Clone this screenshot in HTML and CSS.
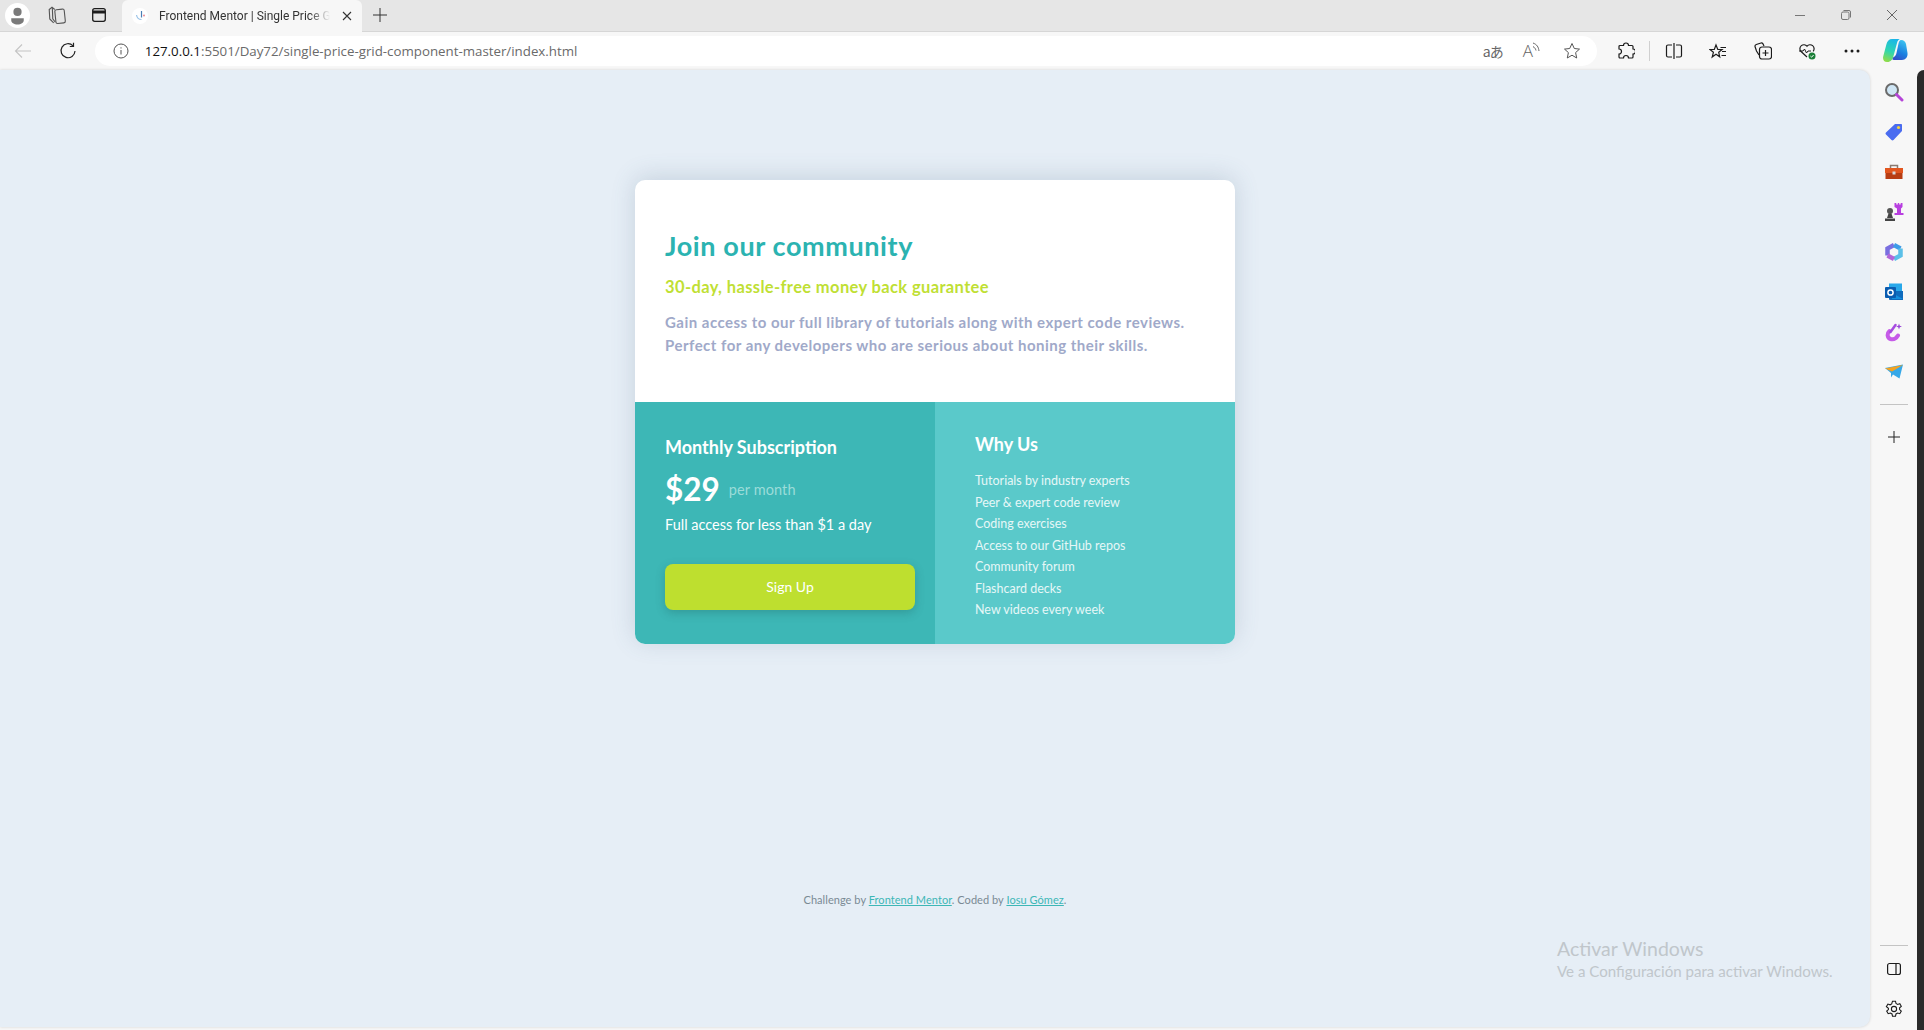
FILE: index.html

```html
<!DOCTYPE html>
<html lang="es">
<head>
  <meta charset="UTF-8" />
  <title>Frontend Mentor | Single Price Grid Component</title>
  <link rel="stylesheet" href="styles.css">
</head>
<body>
  <div class="tabstrip">
    <div class="profile">
      <svg width="25" height="25" viewBox="0 0 28 28"><circle cx="14" cy="14" r="14" fill="#fff"/><circle cx="14" cy="10" r="4.600" fill="#7a7a7a"/><path d="M7 17h14v2.500c0 2.500-3 4.500-7 4.500s-7-2-7-4.500z" fill="#7a7a7a"/></svg>
    </div>
    <div class="strip-btn">
      <svg width="20" height="20" viewBox="0 0 18 18" fill="none" stroke="#555" stroke-width="1"><rect x="7.500" y="4" width="8.500" height="12.500" rx="1.500" transform="rotate(-6 11 10)"/><path d="M7 4 4.500 2 2 4l.5 8.500L6 16"/><path d="M4.800 2.500l.4 10 2.300 3"/></svg>
    </div>
    <div class="strip-btn">
      <svg width="16" height="16" viewBox="0 0 16 16" fill="none" stroke="#1c1c1c" stroke-width="1.300"><rect x="1.700" y="1.700" width="12.600" height="12.600" rx="2"/><path d="M1.700 5h12.600" stroke-width="3"/></svg>
    </div>
    <div class="tab">
      <svg class="favicon" width="16" height="16" viewBox="0 0 16 16"><circle cx="8" cy="8" r="8" fill="#fff"/><path d="M9.500 3v6.500" stroke="#4a7fb5" stroke-width="1.200" fill="none"/><path d="M4.500 7c.5 3 2.500 4.500 5 4.500" stroke="#9ac3e8" stroke-width="1.200" fill="none"/><circle cx="12" cy="7.500" r=".9" fill="#e8808a"/></svg>
      <span class="tab-title">Frontend Mentor | Single Price Grid Component</span>
      <svg class="tab-close" width="10" height="10" viewBox="0 0 10 10" stroke="#333" stroke-width="1.100"><path d="M1 1l8 8M9 1l-8 8"/></svg>
    </div>
    <div class="new-tab">
      <svg width="16" height="16" viewBox="0 0 16 16" stroke="#333" stroke-width="1"><path d="M8 1v14M1 8h14"/></svg>
    </div>
    <div class="win-controls">
      <div class="win-btn"><svg width="12" height="12" viewBox="0 0 12 12" stroke="#777"><path d="M1 6.500h10"/></svg></div>
      <div class="win-btn"><svg width="12" height="12" viewBox="0 0 12 12" fill="none" stroke="#777"><rect x="1.500" y="3" width="7.500" height="7.500" rx="1.500"/><path d="M3.500 1.500h5.500a1.500 1.500 0 0 1 1.500 1.500v5.500"/></svg></div>
      <div class="win-btn"><svg width="12" height="12" viewBox="0 0 12 12" stroke="#666"><path d="M1 1l10 10M11 1L1 11"/></svg></div>
    </div>
  </div>

  <div class="toolbar">
    <div class="tool-btn">
      <svg width="18" height="18" viewBox="0 0 18 18" fill="none" stroke="#c4c4c4" stroke-width="1.100"><path d="M17 9H1.500M8 2.500 1.500 9 8 15.500"/></svg>
    </div>
    <div class="tool-btn">
      <svg width="18" height="18" viewBox="0 0 18 18" fill="none" stroke="#222" stroke-width="1.200"><path d="M14 3.800A7 7 0 1 0 16 9"/><path d="M14.500 .8v3.700h-3.700"/></svg>
    </div>
    <div class="address">
      <svg class="info" width="16" height="16" viewBox="0 0 16 16" fill="none" stroke="#555" stroke-width="1"><circle cx="8" cy="8" r="7"/><path d="M8 7v4.500M8 4.300v1.200"/></svg>
      <span class="url"><span class="host">127.0.0.1</span>:5501/Day72/single-price-grid-component-master/index.html</span>
      <div class="addr-icons">
        <span class="translate">aあ</span>
        <span class="read-aloud">A<svg width="7" height="14" viewBox="0 0 7 14" fill="none" stroke="#666"><path d="M0 1c4 1.500 5.500 4 6 8M0 4.500c1.500 1 2.500 2 3 4"/></svg></span>
        <svg width="18" height="18" viewBox="0 0 18 18" fill="none" stroke="#555" stroke-width="1"><path d="M9 1.500l2.300 5 5.200.6-3.900 3.500 1.100 5.400L9 13.200 4.300 16l1.100-5.400L1.500 7.100l5.200-.6z"/></svg>
      </div>
    </div>
    <div class="tool-btn first">
      <svg width="18" height="18" viewBox="0 0 18 18" fill="none" stroke="#1c1c1c" stroke-width="1.200"><path d="M6.500 3.500a2.500 2.500 0 0 1 5 0H15a1 1 0 0 1 1 1V7a2.500 2.500 0 0 1 0 5v3a1 1 0 0 1-1 1h-3.500a2.500 2.500 0 0 0-5 0H3a1 1 0 0 1-1-1v-3a2.500 2.500 0 0 0 0-5V4.500a1 1 0 0 1 1-1z"/></svg>
    </div>
    <div class="tool-sep"></div>
    <div class="tool-btn">
      <svg width="18" height="18" viewBox="0 0 18 18" fill="none" stroke="#1c1c1c" stroke-width="1.200"><path d="M7 3H3a1.500 1.500 0 0 0-1.500 1.500v9A1.500 1.500 0 0 0 3 15h4M11 3h4a1.500 1.500 0 0 1 1.500 1.500v9A1.500 1.500 0 0 1 15 15h-4M9 1v16"/></svg>
    </div>
    <div class="tool-btn">
      <svg width="18" height="18" viewBox="0 0 18 18" fill="none" stroke="#1c1c1c" stroke-width="1.200"><path d="M7 1.500 8.800 6H13L9.700 8.700l1 4.600L7 10.800l-3.800 2.700 1.200-4.700L1 6h4.300zM11.500 4H17M13 8h4M12.500 12H17" transform="translate(0 1.500)"/></svg>
    </div>
    <div class="tool-btn">
      <svg width="18" height="18" viewBox="0 0 18 18" fill="none" stroke="#1c1c1c" stroke-width="1.200"><path d="M5 13 2.500 9 1 4.500C.8 3.500 1.500 2.800 2.300 2.500L7 1c.8-.2 1.500.2 2 .9L10 4"/><rect x="5.500" y="5" width="12" height="12" rx="2.500"/><path d="M11.500 8v6M8.500 11h6"/></svg>
    </div>
    <div class="tool-btn">
      <svg width="18" height="18" viewBox="0 0 18 18" fill="none"><path d="M9 15 2.800 9.300A4 4 0 0 1 9 4.200a4 4 0 0 1 6.200 5.100" stroke="#1c1c1c" stroke-width="1.200"/><path d="M1 9h4l1.500-2 2 4 1.500-2h3" stroke="#1c1c1c" stroke-width="1"/><circle cx="14" cy="14" r="3.500" fill="#1a7f37"/><path d="M12.400 14l1.200 1.200 2-2.200" stroke="#fff"/></svg>
    </div>
    <div class="tool-btn">
      <svg width="16" height="4" viewBox="0 0 16 4" fill="#1c1c1c"><circle cx="2" cy="2" r="1.500"/><circle cx="8" cy="2" r="1.500"/><circle cx="14" cy="2" r="1.500"/></svg>
    </div>
    <div class="tool-btn">
      <svg width="25" height="23" viewBox="0 0 25 23"><defs><linearGradient id="cpa" x1="0.600" y1="0" x2="0.300" y2="1"><stop offset="0" stop-color="#1bb6e8"/><stop offset=".55" stop-color="#2fd6b0"/><stop offset="1" stop-color="#8fdc4a"/></linearGradient><linearGradient id="cpb" x1="0.700" y1="0" x2="0.300" y2="1"><stop offset="0" stop-color="#3cc4f0"/><stop offset=".6" stop-color="#1b7fe0"/><stop offset="1" stop-color="#3550c8"/></linearGradient></defs><path d="M18 1c3 0 4.500 2 5 4l1.500 9c.5 4-2 7-5.500 7h-8c-2 0-2-1.500-1-2.500 2-1 3-2.500 3.500-4.500l2-9.500C16 2.500 16.800 1 18 1z" fill="url(#cpb)"/><path d="M9 0h8c-1.500.5-2.500 2-3 4L10.500 17c-.7 3.500-3 6-6 6H4c-3 0-4.500-2.500-3.800-5.500L3.500 5C4.300 2 6 0 9 0z" fill="url(#cpa)"/></svg>
    </div>
  </div>

  <div class="window-body">
    <main class="page">
      <div class="card">
        <section class="intro">
          <h1>Join our community</h1>
          <h2>30-day, hassle-free money back guarantee</h2>
          <p>Gain access to our full library of tutorials along with expert code reviews.<br>Perfect for any developers who are serious about honing their skills.</p>
        </section>
        <div class="bottom">
          <section class="subscription">
            <h3>Monthly Subscription</h3>
            <div class="price"><strong>$29</strong><span>per month</span></div>
            <p>Full access for less than $1 a day</p>
            <button class="signup">Sign Up</button>
          </section>
          <section class="why">
            <h3>Why Us</h3>
            <ul>
              <li>Tutorials by industry experts</li>
              <li>Peer &amp; expert code review</li>
              <li>Coding exercises</li>
              <li>Access to our GitHub repos</li>
              <li>Community forum</li>
              <li>Flashcard decks</li>
              <li>New videos every week</li>
            </ul>
          </section>
        </div>
      </div>
      <footer class="attribution">Challenge by <a href="#">Frontend Mentor</a>. Coded by <a href="#">Iosu Gómez</a>.</footer>
      <div class="activate">
        <div class="activate-title">Activar Windows</div>
        <div class="activate-sub">Ve a Configuración para activar Windows.</div>
      </div>
    </main>

    <aside class="sidebar">
      <div class="side-icon"><svg width="20" height="20" viewBox="0 0 20 20"><circle cx="8" cy="8" r="6" fill="#cfe6f5" stroke="#6b6b6b" stroke-width="2"/><path d="M12.500 12.500 18 18" stroke="#b545d8" stroke-width="3" stroke-linecap="round"/></svg></div>
      <div class="side-icon"><svg width="20" height="20" viewBox="0 0 20 20"><path d="M11 2h6c.6 0 1 .4 1 1v6L9.500 18c-.6.600-1.400.600-2 0L2 12.500c-.6-.6-.6-1.400 0-2z" fill="#4a6cf0"/><circle cx="14.500" cy="5.500" r="1.600" fill="#f5d33c"/></svg></div>
      <div class="side-icon"><svg width="20" height="20" viewBox="0 0 20 20"><path d="M6.500 6V3.500h7V6" fill="none" stroke="#8a7a70" stroke-width="1.500"/><rect x="1" y="6" width="18" height="5" fill="#e2561f"/><rect x="1.500" y="11" width="17" height="6" fill="#b83d12"/><rect x="8.500" y="9.500" width="3" height="3" fill="#d8d8d8"/></svg></div>
      <div class="side-icon"><svg width="20" height="20" viewBox="0 0 20 20"><path d="M11 1h1.800v1.500h1.500V1h1.400v1.500h1.500V1H19v4l-1.500 1.500V11H20v2h-9v-2h2.500V6.500L11 5z" fill="#b83fe0" transform="translate(-.5 0)"/><circle cx="6" cy="9" r="3" fill="#555"/><path d="M4.500 11.500h3L9 16H3zM1 16.500h10V19H1z" fill="#444"/></svg></div>
      <div class="side-icon"><svg width="20" height="20" viewBox="0 0 20 20" fill="none" stroke-width="4.500"><path d="M10 3 3.500 6.500v7" stroke="#7a6fe0"/><path d="M10 3l6.500 3.500" stroke="#3d9be8"/><path d="M16.500 6.500v7L10 17" stroke="#5bc0e8"/><path d="M3.500 13.500 10 17" stroke="#b266d8"/></svg></div>
      <div class="side-icon"><svg width="20" height="20" viewBox="0 0 20 20"><rect x="5" y="1.500" width="13" height="9" fill="#28a8ea"/><path d="M5 9h14v9H6a1 1 0 0 1-1-1z" fill="#0f6cbd"/><path d="M8 11l11 6H8z" fill="#1490df"/><rect x="1" y="5" width="11" height="11" rx="1" fill="#0a5cb0"/><circle cx="6.500" cy="10.500" r="2.600" fill="none" stroke="#fff" stroke-width="1.500"/></svg></div>
      <div class="side-icon"><svg width="20" height="20" viewBox="0 0 20 20" fill="none"><path d="M5.500 9C2.800 11.500 3 16 6.500 17c3 .8 6-1 7.500-3.500" stroke="#c65be8" stroke-width="4" stroke-linecap="round"/><path d="M6.500 10 11.500 3" stroke="#a64be0" stroke-width="2.500" stroke-linecap="round"/><path d="M15 1.500l.8 2.200L18 4.500l-2.200.8L15 7.500l-.8-2.200L12 4.500l2.200-.8z" fill="#9a46d8"/></svg></div>
      <div class="side-icon"><svg width="20" height="20" viewBox="0 0 20 20"><path d="M1 6 19 2.500 15.500 16.500 9 12.500 7 15.500V11z" fill="#36a8e8"/><path d="M1 6.500 19 3 8 9.500z" fill="#f5a21f"/></svg></div>
      <div class="side-sep"></div>
      <div class="side-plus"><svg width="14" height="14" viewBox="0 0 14 14" stroke="#222"><path d="M7 1v12M1 7h12"/></svg></div>
      <div class="side-bottom">
        <div class="side-sep"></div>
        <div class="side-panel"><svg width="16" height="16" viewBox="0 0 16 16" fill="none" stroke="#1c1c1c" stroke-width="1.200"><rect x="1.600" y="2.500" width="12.800" height="11" rx="2"/><path d="M10 2.500v11"/></svg></div>
        <div class="side-gear"><svg width="18" height="18" viewBox="0 0 18 18" fill="none" stroke="#1c1c1c" stroke-width="1.100"><circle cx="9" cy="9" r="2.600"/><path d="M7.500 1.200h3l.5 2.300 1.600.9 2.200-.7 1.500 2.600-1.700 1.500v1.800l1.700 1.500-1.500 2.600-2.200-.7-1.600.9-.5 2.300h-3l-.5-2.300-1.600-.9-2.200.7-1.500-2.600 1.700-1.500V8.200L1.400 6.700l1.500-2.600 2.200.7 1.600-.9z"/></svg></div>
      </div>
    </aside>
    <div class="desktop-edge"></div>
  </div>
</body>
</html>
```

FILE: styles.css

```css
* {
  box-sizing: border-box;
}
body {
  margin: 0;
  height: 1030px;
  overflow: hidden;
  display: flex;
  flex-direction: column;
  background-color: #f7f7f7;
  font-family: "Open Sans", sans-serif;
}
svg {
  display: block;
}

/* browser chrome */
.tabstrip {
  height: 32px;
  display: flex;
  align-items: flex-end;
  background-color: #e6e6e6;
  border-bottom: 1px solid #d6d6d6;
}
.profile {
  width: 36px;
  height: 32px;
  display: flex;
  align-items: center;
  padding-left: 5px;
}
.strip-btn {
  width: 42px;
  height: 32px;
  display: flex;
  align-items: center;
  justify-content: center;
}
.tab {
  width: 240px;
  height: 32px;
  margin-left: 2px;
  margin-bottom: -1px;
  padding: 0 10px;
  display: flex;
  align-items: center;
  background-color: #f7f7f7;
  border-radius: 6px 6px 0 0;
}
.favicon {
  margin-right: 11px;
}
.tab-title {
  width: 171px;
  font-family: "Roboto", sans-serif;
  font-size: 12px;
  color: #333;
  white-space: nowrap;
  overflow: hidden;
  -webkit-mask-image: linear-gradient(to right, #000 88%, transparent);
  mask-image: linear-gradient(to right, #000 88%, transparent);
}
.tab-close {
  margin-left: 12px;
}
.new-tab {
  width: 36px;
  height: 32px;
  display: flex;
  align-items: center;
  justify-content: center;
}
.win-controls {
  margin-left: auto;
  margin-right: 9px;
  height: 32px;
  display: flex;
}
.win-btn {
  width: 46px;
  display: flex;
  align-items: center;
  justify-content: center;
}
.toolbar {
  height: 38px;
  display: flex;
  align-items: center;
  padding-left: 1px;
  padding-bottom: 1px;
  background-color: #f7f7f7;
}
.tool-btn {
  width: 44.4px;
  height: 30px;
  flex-shrink: 0;
  display: flex;
  align-items: center;
  justify-content: center;
}
.tool-btn.first {
  width: 44px;
  margin-left: 7px;
}
.tool-sep {
  width: 1px;
  height: 20px;
  margin: 0 2px 0 1px;
  background-color: #d0d0d0;
}
.address {
  width: 1502px;
  height: 30px;
  margin-left: 5px;
  padding: 0 16px 0 18px;
  display: flex;
  align-items: center;
  background-color: #fff;
  border-radius: 15px;
}
.url {
  margin-left: 16px;
  font-size: 13.300px;
  color: #6a6a6a;
  white-space: nowrap;
}
.host {
  color: #111;
}
.addr-icons {
  margin-left: auto;
  display: flex;
  align-items: center;
  gap: 22px;
  color: #666;
}
.translate {
  width: 18px;
  font-family: "Noto Sans CJK JP", "Open Sans", sans-serif;
  font-size: 14px;
  letter-spacing: -1px;
  white-space: nowrap;
}
.read-aloud {
  width: 18px;
  display: flex;
  font-size: 17px;
  font-weight: 300;
  line-height: 18px;
}

/* window content */
.window-body {
  flex: 1;
  min-height: 0;
  display: flex;
}
.page {
  position: relative;
  width: 1870px;
  height: 957px;
  padding-top: 110px;
  display: flex;
  flex-direction: column;
  align-items: center;
  background-color: #e6eef6;
  border-radius: 0 10px 10px 0;
  box-shadow: 0 0 3px rgba(0,0,0,0.15);
  font-family: "Lato", sans-serif;
}
.card {
  width: 600px;
  border-radius: 10px;
  overflow: hidden;
  background-color: #fff;
  box-shadow: 0 -3px 24px rgba(70,100,130,0.2);
}
.intro {
  height: 222px;
  padding: 49px 30px 0;
}
h1 {
  margin: 0;
  font-size: 27px;
  line-height: 34px;
  font-weight: 700;
  letter-spacing: 0.6px;
  color: #2bb3b1;
}
h2 {
  margin: 14px 0 0;
  font-size: 16.500px;
  line-height: 20px;
  font-weight: 700;
  letter-spacing: 0.37px;
  color: #c0df34;
}
.intro p {
  margin: 14px 0 0;
  font-size: 15px;
  line-height: 23px;
  font-weight: 700;
  letter-spacing: 0.48px;
  color: #a0a9c9;
}
.bottom {
  height: 242px;
  display: flex;
  color: #fff;
}
.subscription {
  width: 300px;
  padding: 32px 20px 0 30px;
  background-color: #3db7b6;
}
.subscription h3 {
  margin: 0;
  font-size: 18px;
  line-height: 26px;
  font-weight: 700;
}
.price {
  margin-top: 13px;
  height: 32px;
  display: flex;
  align-items: center;
}
.price strong {
  font-size: 31.500px;
  font-weight: 700;
}
.price span {
  margin-left: 9px;
  font-size: 14.500px;
  letter-spacing: 0.1px;
  color: #9bdcd9;
}
.subscription p {
  margin: 10px 0 0;
  font-size: 14.500px;
  line-height: 20px;
}
.signup {
  display: block;
  width: 250px;
  height: 46px;
  margin-top: 29px;
  padding-bottom: 3px;
  border: none;
  border-radius: 8px;
  background-color: #bedf2f;
  color: #fff;
  font-family: "Lato", sans-serif;
  font-size: 14px;
  box-shadow: 0 3px 10px rgba(30,90,90,0.3);
}
.why {
  flex: 1;
  padding: 30px 30px 0 40px;
  background-color: #5ac9ca;
}
.why h3 {
  margin: 0;
  font-size: 18px;
  line-height: 24px;
  font-weight: 700;
}
.why ul {
  margin: 14px 0 0;
  padding: 0;
  list-style: none;
  font-size: 12.500px;
  line-height: 21.500px;
  color: #e6f7f7;
}
.attribution {
  margin-top: 249px;
  font-size: 11px;
  line-height: 14px;
  letter-spacing: 0.05px;
  color: #7a8a94;
}
.attribution a {
  color: #3db7b6;
}

/* overlays on the page */
.activate {
  position: absolute;
  left: 1557px;
  top: 866px;
  color: #c0c6cb;
}
.activate-title {
  font-size: 19.500px;
  line-height: 26px;
}
.activate-sub {
  font-size: 15.100px;
  line-height: 19px;
}

/* edge sidebar */
.sidebar {
  width: 47px;
  height: 957px;
  display: flex;
  flex-direction: column;
  align-items: center;
  padding-top: 2px;
}
.side-icon {
  height: 40px;
  flex-shrink: 0;
  display: flex;
  align-items: center;
  justify-content: center;
}
.side-sep {
  width: 28px;
  height: 1px;
  flex-shrink: 0;
  background-color: #c4c4c4;
}
.sidebar > .side-sep {
  margin-top: 12px;
}
.side-plus {
  margin-top: 25px;
}
.side-bottom {
  margin-top: auto;
  padding-bottom: 9px;
  display: flex;
  flex-direction: column;
  align-items: center;
}
.side-panel {
  margin-top: 15px;
}
.side-gear {
  margin-top: 23px;
}
.desktop-edge {
  flex: 1;
  height: 960px;
  background-color: #2a2a2a;
  border-radius: 8px 0 0 0;
}
```
